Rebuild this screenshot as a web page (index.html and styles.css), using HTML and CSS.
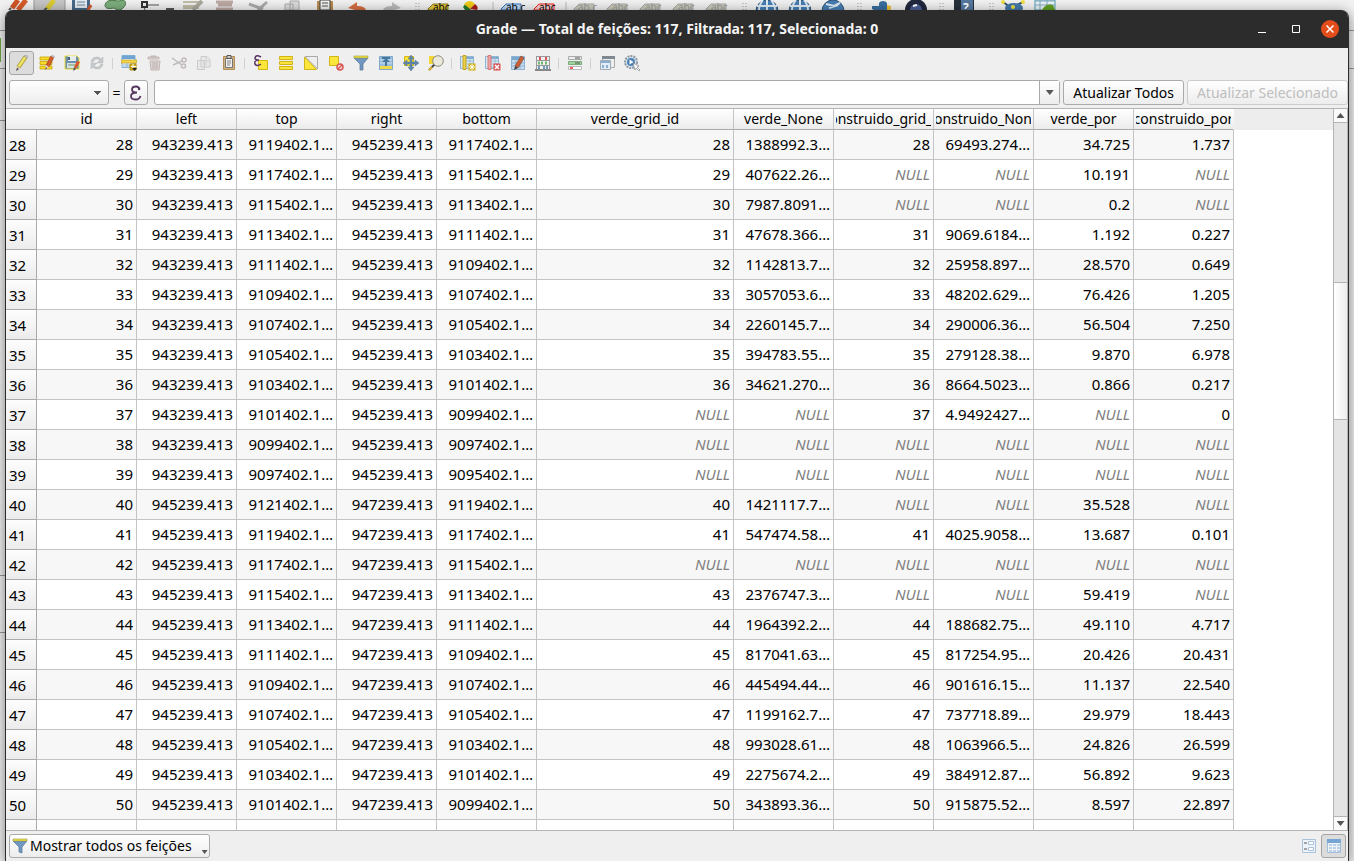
FILE: index.html
```html
<!DOCTYPE html>
<html lang="pt-BR">
<head>
<meta charset="utf-8">
<title>Grade — Total de feições: 117, Filtrada: 117, Selecionada: 0</title>
<link rel="stylesheet" href="styles.css">
</head>
<body>
<div class="backdrop" aria-hidden="true">
<svg class="backdrop-icons" width="1100" height="10" viewBox="0 0 1100 10">
  <path d="M34 0h31v10H34z" fill="#c6c6c6"/><path d="M34 0v10M65 0v10" stroke="#999"/>
  <g stroke-width="5"><path d="M18 0l-6 8" stroke="#cf5527"/><path d="M26 0l-8 10" stroke="#d85c29"/><path d="M54 0l-7 9" stroke="#dbcb35"/></g>
  <path d="M11 8l-2 2M47 8l-3 2" stroke="#555" stroke-width="2"/>
  <path d="M72 0h18v10H72z" fill="#476a8a"/><path d="M75 0h12v8H75z" fill="#e4edf4"/><path d="M77 2h8M77 5h8" stroke="#718695"/><path d="M88 10l3-5" stroke="#ce5a30" stroke-width="3"/>
  <path d="M105 5c2-7 9-4 14-4 8-3 8 4 4 7-2 3-7 2-9 0-5 1-9 1-9-3z" fill="#7cae7d" stroke="#4c7b4c"/>
  <path d="M144 5h15M143 5l2 5" stroke="#555" fill="none"/><path d="M142 2h5v5h-5z" fill="#eee" stroke="#333" stroke-width="2"/><path d="M166 9h8" stroke="#555" stroke-width="2"/>
  <g fill="#c1bda7"><path d="M183 1h19v2h-19zM183 5h16v4h-16z"/></g><path d="M202 1l-9 9" stroke="#aaa99c" stroke-width="4"/>
  <path d="M216 2h17M218 5h14M216 9h17" stroke="#bda9a4" stroke-width="3"/>
  <path d="M249 4l14 5M267 2l-9 8" stroke="#aaa" stroke-width="3"/>
  <path d="M285 4h8v6h-8zM290 1h9v9h-9z" fill="#ddd" stroke="#aaa"/>
  <path d="M317 1h16v9h-16z" fill="#b88b52"/><path d="M320 0h10v10h-10z" fill="#f2f2ef" stroke="#444"/><path d="M322 3h6M322 6h6" stroke="#555"/>
  <path d="M348 8l9-6v4q8 0 9 4h-11z" fill="#d56f42"/><path d="M401 8l-9-6v4q-8 0-9 4h11z" fill="#bbb"/>
  <g fill="#eee" stroke-width="1"><path d="M428 9l5-5h15v6h-20z" fill="#e2c741" stroke="#8d7b20"/><path d="M501 9l5-5h15v6h-20z" fill="#b9d6f3" stroke="#3973ba"/><path d="M534 9l5-5h15v6h-20z" fill="#f8cccc" stroke="#e22"/><path d="M574 9l5-5h15v6h-20zM607 9l5-5h15v6h-20zM640 9l5-5h15v6h-20zM673 9l5-5h15v6h-20zM706 9l5-5h15v6h-20z" fill="#cbcbbb" stroke="#aaa"/></g>
  <g class="tag-text"><text x="433" y="11">abc</text><text x="506" y="11">ab.c</text><text x="539" y="11">abc</text><g fill="#999"><text x="578" y="11">ab.c</text><text x="612" y="11">abc</text><text x="645" y="11">abc</text><text x="678" y="11">abc</text><text x="711" y="11">abc</text></g></g>
  <path d="M463 7l3-4 5 7h-6z" fill="#267b2d"/><path d="M464 4q6-6 11 0l-5 5z" fill="#f1cc16"/><path d="M470 9l5-5q4 3 2 6z" fill="#a9201d"/>
  <g fill="#477eb6" stroke="#315575"><circle cx="767" cy="11" r="11"/><circle cx="800" cy="11" r="11"/><circle cx="833" cy="11" r="11"/></g>
  <g fill="none" stroke="#deebf4" stroke-width="2"><path d="M757 6h20M767 0v10M763 0q-4 5-4 10M771 0q4 5 4 10M790 6h20M800 0v10M796 0q-4 5-4 10M804 0q4 5 4 10M826 4l8 2 6-3M829 8l9-3"/></g>
  <path d="M872 9V6h7V3q1-2 4-2t4 2v7h-13z" fill="#396f9f"/><path d="M887 10V5l4 1v4z" fill="#f0c43c"/>
  <circle cx="916" cy="10" r="11" fill="#20283e"/><circle cx="916" cy="10" r="6" fill="#495d94"/><path d="M913 6l4-1" stroke="#fff" stroke-width="2"/>
  <path d="M954 0h20v10h-20z" fill="#27313c"/><path d="M961 0h12v10h-12z" fill="#56789f"/><text class="help" x="963" y="12">?</text>
  <path d="M1003 2l7 5M1023 2l-8 4" stroke="#30506b" stroke-width="2"/><ellipse cx="1014" cy="8" rx="9" ry="5" fill="#4778a9"/><g fill="#f1df41"><circle cx="1003" cy="2" r="2"/><circle cx="1023" cy="2" r="2"/><circle cx="1013" cy="7" r="2"/></g>
  <path d="M1035 0h20v10h-20z" fill="#eef5fa" stroke="#4c9eb3"/><path d="M1035 1h20M1040 0v10M1047 0v10M1035 5h20" stroke="#7faabd"/><path d="M1042 10q4-7 11-5l2 5z" fill="#63a120"/>
  <path d="M416 3v7M419 3v7M743 3v7M746 3v7M858 3v7M861 3v7M940 3v7M943 3v7M990 3v7M993 3v7" stroke="#999" stroke-dasharray="1 2"/><path d="M493 2v8M566 2v8" stroke="#bbb"/>
</svg>
</div>

<main class="window">
  <header class="titlebar">
    <h1>Grade — Total de feições: 117, Filtrada: 117, Selecionada: 0</h1>
    <div class="window-controls">
      <button aria-label="Minimizar"><svg width="18" height="18"><path d="M5 12.500h8" stroke="#fff"/></svg></button>
      <button aria-label="Maximizar"><svg width="18" height="18"><path d="M5.500 5.500h7v7h-7z" fill="none" stroke="#fff"/></svg></button>
      <button aria-label="Fechar"><svg width="18" height="18"><circle cx="9" cy="9" r="9" fill="#e24d1b"/><path d="M5.500 5.500l7 7M12.500 5.500l-7 7" stroke="#fff" stroke-width="1.500"/></svg></button>
    </div>
  </header>

  <nav class="toolbar" aria-label="Ferramentas">
    <button class="pressed" aria-label="Editar"><svg viewBox="0 0 16 16"><path d="M3 11L10 1l3 2-7 10z" fill="#e5d544" stroke="#9a8e39" stroke-width=".7"/><path d="M5 11l6-9" stroke="#faf08f"/><path d="M3 11l3 2-4 3z" fill="#d8c7ae"/><path d="M2 16l1-3 2 1z" fill="#444"/><path d="M10 1l1-1 3 1-1 2z" fill="#cbcac3" stroke="#888" stroke-width=".4"/></svg></button>
    <button aria-label="Edição múltipla"><svg viewBox="0 0 16 16"><path d="M1 2h12v3H1zM1 6.500h12v3H1zM1 11h12v3H1z" fill="#f8dc25" stroke="#c6a40a" stroke-width=".8"/><path d="M7 10l5-9 3 1-5 10z" fill="#d85c29" stroke="#91482e" stroke-width=".7"/><path d="M7 10l3 2-4 3z" fill="#e9d4ba"/><path d="M6 15l1-3 1 1z" fill="#333"/><path d="M12 1l1-1 3 1-1 2z" fill="#bbb"/></svg></button>
    <button aria-label="Salvar edições"><svg viewBox="0 0 16 16"><path d="M1 1h12l2 2v11H1z" fill="#6b8fae" stroke="#e9dc37"/><path d="M4 1h8v5H4z" fill="#e7ecee"/><path d="M4 2h2v3H4z" fill="#4a6073"/><path d="M3 8h10v5H3z" fill="#d8e2df"/><path d="M4 10h7" stroke="#6d9b74"/><path d="M10 12l3-6 3 1-4 7z" fill="#d85927"/><path d="M10 12l2 2-3 2z" fill="#555"/></svg></button>
    <button aria-label="Recarregar" disabled><svg viewBox="0 0 16 16"><path d="M2 7q1-5 6-5 3 0 4 2l2-2v6H8l3-3Q6 2 4 7zM14 9q-1 5-6 5-3 0-4-2l-2 2V8h6l-3 3q5 3 7-2z" fill="#c5c8ca" stroke="#b4b8bb" stroke-width=".5"/></svg></button>
    <i class="separator"></i>
    <button aria-label="Adicionar feição"><svg viewBox="0 0 16 16"><path d="M1 .5h13v12H1z" fill="#f1f6f9" stroke="#7daed6"/><path d="M1 1h13v3H1z" fill="#6fa5d4"/><path d="M0 5h16v3H0z" fill="#f7d946" stroke="#b2972e" stroke-width=".7"/><path d="M2 10h7M2 12h7M6 8v5" stroke="#91b7d5"/><path d="M9 9h6v6H9z" fill="#d5ad19" stroke="#ad8b13"/><path d="M12 9v5M10 11.500h5" stroke="#fff"/><path d="M11 13h5l-2.500 3z" fill="#222"/></svg></button>
    <button aria-label="Excluir" disabled><svg viewBox="0 0 16 16"><path d="M2 2h11v2H2zM5 1h5v1H5zM4 6h10l-1 9H5z" fill="#ddd5d4" stroke="#c2b6b5"/><path d="M7 7v7M9 7v7M11 7v7" stroke="#bbb0b0"/></svg></button>
    <button aria-label="Recortar" disabled><svg viewBox="0 0 16 16"><path d="M1 3l10 7M2 10l9-4" stroke="#bcbcbc" stroke-width="1.500"/><g fill="none" stroke="#c2baba" stroke-width="1.500"><circle cx="13" cy="5" r="2"/><circle cx="12.500" cy="11" r="2"/></g></svg></button>
    <button aria-label="Copiar" disabled><svg viewBox="0 0 16 16"><path d="M1.500 5.500h7v9h-7zM5 1.500h6l3 3V12H5z" fill="#e8e8e8" stroke="#cacaca"/><path d="M10 2v4h4M7 7h4M7 9h4" fill="none" stroke="#d0d0d0"/></svg></button>
    <button aria-label="Colar"><svg viewBox="0 0 16 16"><path d="M2.500 1.500h11v13h-11z" fill="#ceb284" stroke="#b28e57"/><path d="M4.500 3.500h7v9h-7z" fill="#eee" stroke="#777"/><path d="M6 .5h4v3H6z" fill="#ccc" stroke="#555"/><path d="M6 6h4M6 8h4M6 10h3" stroke="#888"/></svg></button>
    <i class="separator"></i>
    <button aria-label="Selecionar por expressão"><svg viewBox="0 0 16 16"><path d="M5.500 5.500h9v9h-9z" fill="#fbe63b" stroke="#d4b518"/><path d="M8 2Q3-1 2 3q0 2 4 2-5 0-4 4 2 3 6 0" fill="none" stroke="#573361" stroke-width="1.500"/></svg></button>
    <button aria-label="Selecionar tudo"><svg viewBox="0 0 16 16"><path d="M1.500 1.500h13v3h-13zM1.500 6.500h13v3h-13zM1.500 11.500h13v3h-13z" fill="#fae33b" stroke="#d2b316"/></svg></button>
    <button aria-label="Inverter seleção"><svg viewBox="0 0 16 16"><path d="M2 1.500h12.500V14z" fill="#eee" stroke="#aaa"/><path d="M1.500 2v12.500h12z" fill="#fbe63b" stroke="#d4b518"/></svg></button>
    <button aria-label="Desfazer seleção"><svg viewBox="0 0 16 16"><path d="M1.500 1.500h9v9h-9z" fill="#fbe63b" stroke="#d4b518"/><circle cx="12" cy="12" r="3" fill="#fbdada" stroke="#d95757" stroke-width="1.500"/><path d="M10 14l4-4" stroke="#d95757" stroke-width="1.500"/></svg></button>
    <button aria-label="Filtrar"><svg viewBox="0 0 16 16"><path d="M1 3h14l-5 6v6H7V9z" fill="#7198c3" stroke="#557494" stroke-width=".7"/><path d="M1 1h14v2H1z" fill="#ede242" stroke="#9d9b45" stroke-width=".6"/></svg></button>
    <button aria-label="Mover para o topo"><svg viewBox="0 0 16 16"><path d="M1.500 1.500h13v13h-13z" fill="#99bee0" stroke="#82a8c9"/><path d="M2 11h12v3H2z" fill="#edda45"/><path d="M2 5h12M2 8h12" stroke="#c9dcea"/><path d="M4 2h8v2H4zM8 3l4 4H9v4H7V7H4z" fill="#45769d"/></svg></button>
    <button aria-label="Deslocar para seleção"><svg viewBox="0 0 16 16"><path d="M1.500 1.500h9v9h-9z" fill="#fbe63b" stroke="#d4b518"/><path d="M8 0l3 4H9v3h3V5l4 3-4 3V9H9v3h2l-3 4-3-4h2V9H4v2L0 8l4-3v2h3V4H5z" fill="#6287ad" stroke="#456a91" stroke-width=".4"/></svg></button>
    <button aria-label="Zoom para seleção"><svg viewBox="0 0 16 16"><path d="M1 1h8v8H1z" fill="#f1d635"/><path d="M1 15l6-6" stroke="#444" stroke-width="2"/><path d="M1 15l3-3" stroke="#e1b32a" stroke-width="2"/><circle cx="10" cy="6" r="5.300" fill="#e9e8da" stroke="#8e8d80"/></svg></button>
    <i class="separator"></i>
    <button aria-label="Novo campo"><svg viewBox="0 0 16 16"><path d="M.5 1.500h13v12H.5z" fill="#d9e7f0" stroke="#8eb4d4"/><path d="M6 2h7v2H6z" fill="#7da8cd"/><path d="M6 6h7M6 9h7M6 12h7M10 2v11" stroke="#9abed9"/><path d="M3 .5h3v14H3z" fill="#e9cf4c" stroke="#c6a529"/><path d="M8.500 8.500h7v7h-7z" fill="#d3b118"/><path d="M12 9v6M9 12h6M10 10l4 4M14 10l-4 4" stroke="#fff" stroke-width=".9"/></svg></button>
    <button aria-label="Excluir campo"><svg viewBox="0 0 16 16"><path d="M.5 1.500h13v12H.5z" fill="#d9e7f0" stroke="#8eb4d4"/><path d="M6 2h7v2H6z" fill="#7da8cd"/><path d="M6 6h7M6 9h7M6 12h7M10 2v11" stroke="#9abed9"/><path d="M3 .5h3v14H3z" fill="#eba3a4" stroke="#d77b7c"/><path d="M8.500 8.500h7v7h-7z" fill="#db5151"/><path d="M10 10l4 4M14 10l-4 4" stroke="#fff" stroke-width="1.500"/></svg></button>
    <button aria-label="Editar campos"><svg viewBox="0 0 16 16"><path d="M1.500 1.500h13v13h-13z" fill="#c8dced" stroke="#8eb4d4"/><path d="M2 2h12v3H2z" fill="#78a7cf"/><path d="M2 8h12M2 11h12M6 4v10M10 4v10" stroke="#8eb3d2"/><path d="M5 11l6-10 3 2-6 10z" fill="#cc5f35" stroke="#7d4d37" stroke-width=".7"/><path d="M5 11l3 2-4 2z" fill="#444"/></svg></button>
    <button aria-label="Calculadora de campo"><svg viewBox="0 0 16 16"><path d="M1.500 1v13M14.500 1v13M1 5.500h14M1 10.500h14M1 1.500h14" fill="none" stroke="#999"/><path d="M0 14h16v2H0z" fill="#888"/><path d="M4 3.500h3M10 3.500h3" stroke="#dc5058" stroke-width="3" stroke-dasharray="2 1"/><path d="M3 8h5M10 8h2" stroke="#75b775" stroke-width="3" stroke-dasharray="2 1"/><path d="M3 12.500h3M8 12.500h5" stroke="#6f9db9" stroke-width="3" stroke-dasharray="2 1"/></svg></button>
    <i class="separator"></i>
    <button aria-label="Formatação condicional"><svg viewBox="0 0 16 16"><path d="M1.500 1.500h13v3h-13z" fill="#eee" stroke="#aaa"/><path d="M1.500 6.500h13v3h-13z" fill="#a1d5a0" stroke="#7cab7c"/><path d="M1.500 11.500h13v3h-13z" fill="#fff" stroke="#bbb"/><path d="M8 3h5M8 8h5" stroke="#555"/><path d="M3 13h3" stroke="#e22" stroke-width="1.500"/></svg></button>
    <i class="separator"></i>
    <button aria-label="Encaixar tabela"><svg viewBox="0 0 16 16"><path d="M3.500 1.500h12v11h-12z" fill="#eee" stroke="#aaa"/><path d="M3 1h13v3H3z" fill="#808991"/><path d="M1.500 5.500h10v9h-10z" fill="#e3edf3" stroke="#9eacb7"/><path d="M2 6h9v2H2zM3 10h2v3H3zM7 10h2v3H7z" fill="#8aafd0"/></svg></button>
    <button aria-label="Ações"><svg viewBox="0 0 16 16"><circle cx="7" cy="7" r="6" fill="#dce4e9" stroke="#8b99a5" stroke-width="2" stroke-dasharray="2 1"/><circle cx="7" cy="7" r="4" fill="#4c82b5"/><path d="M5.500 4.500l4 2.500-4 2.500z" fill="#fff"/><path d="M9 8l6 3-2 1 3 3-1 1-3-3-1 2z" fill="#fff" stroke="#888" stroke-width=".7"/></svg></button>
  </nav>

  <form class="field-bar">
    <select class="field-select" aria-label="Campo"><option></option></select>
    <label class="equals" for="expression">=</label>
    <button type="button" class="epsilon" aria-label="Editor de expressão"><svg width="14" height="16" viewBox="0 0 14 16"><path d="M10.500 4.500Q10 1.500 7 1.500 3 1.500 3 4.500 3 7.500 8 7.500 2 7.500 2 11q0 3.500 4.500 3.500 4 0 5-3.500" fill="none" stroke="#55365f" stroke-width="1.800"/><circle cx="10" cy="4" r="1.200" fill="#55365f"/></svg></button>
    <div class="expression">
      <input id="expression" type="text">
      <button type="button" aria-label="Expressões recentes"><i class="arrow down"></i></button>
    </div>
    <button type="button" class="push">Atualizar Todos</button>
    <button type="button" class="push" disabled>Atualizar Selecionado</button>
  </form>

  <section class="grid">
    <div class="grid-view">
      <table>
        <colgroup><col class="col-row"><col span="5" class="col"><col class="col-wide"><col span="5" class="col"><col></colgroup>
        <thead><tr>
          <th class="corner"></th>
          <th><span>id</span></th><th><span>left</span></th><th><span>top</span></th><th><span>right</span></th><th><span>bottom</span></th><th><span>verde_grid_id</span></th><th><span>verde_None</span></th><th><span>construido_grid_id</span></th><th><span>construido_None</span></th><th><span>verde_por</span></th><th class="last"><span>construido_por</span></th>
          <th class="filler"></th>
        </tr></thead>
        <tbody id="rows"></tbody>
      </table>
    </div>
    <div class="scrollbar" aria-hidden="true">
      <div class="scroll-step"><i class="arrow up"></i></div>
      <div class="track"><div class="thumb"></div></div>
      <div class="scroll-step"><i class="arrow down"></i></div>
    </div>
  </section>

  <footer class="statusbar">
    <button class="filter"><svg viewBox="0 0 16 16"><path d="M1 3h14l-5 6v6l-3-1V9z" fill="#7198c3" stroke="#557494" stroke-width=".7"/><path d="M1 1h14v2H1z" fill="#ede242" stroke="#9d9b45" stroke-width=".6"/></svg>Mostrar todos os feições<i class="arrow down"></i></button>
    <div class="views">
      <button aria-label="Formulário"><svg viewBox="0 0 16 16"><path d="M1.500 1.500h13v13h-13z" fill="#edf3f8" stroke="#a9c2da"/><path d="M3 5h3M3 11h3" stroke="#555"/><path d="M7.500 3.500h5v3h-5zM7.500 9.500h5v3h-5z" fill="#fff" stroke="#a9c2da"/></svg></button>
      <button class="pressed" aria-label="Tabela"><svg viewBox="0 0 16 16"><path d="M1.500 1.500h13v13h-13z" fill="#edf3f8" stroke="#a1bfdd"/><path d="M1 1h14v4H1z" fill="#78a6d4"/><path d="M3 7h3M7 7h3M11 7h3M3 10h3M7 10h3M11 10h3M3 13h3M7 13h3M11 13h3" stroke="#8db2d6"/></svg></button>
    </div>
  </footer>
</main>
<script src="table.js"></script>
</body>
</html>
```
FILE: styles.css
```css
* { box-sizing: border-box; }
body {
  margin: 0;
  height: 100vh;
  overflow: hidden;
  font: 14px/20px "Noto Sans", "Open Sans", sans-serif;
  color: #000;
  background: #ededed;
}
button, input, select { font: inherit; color: inherit; margin: 0; padding: 0; }
button { border: 0; background: none; }
svg { display: block; }

.backdrop {
  position: absolute;
  inset: 0;
  background: linear-gradient(#999, #999) 0 30px / 100% 1px no-repeat,
    linear-gradient(#999, #999) 0 68px / 100% 1px no-repeat,
    linear-gradient(#999, #999) 0 120px / 6px 1px no-repeat,
    linear-gradient(#70ac45, #70ac45) 0 38px / 1px 24px no-repeat,
    linear-gradient(#999, #999) 0 575px / 6px 1px no-repeat,
    linear-gradient(#999, #999) 0 632px / 6px 1px no-repeat,
    #f2f2f2;
}
.tag-text { font: 10px "Noto Sans", sans-serif; }
.help { font: bold 12px "Noto Sans", sans-serif; fill: #fff; }

.window {
  position: relative;
  display: flex;
  flex-direction: column;
  height: calc(100vh - 10px);
  margin: 10px 5px 0;
  border: solid #2b2b2b;
  border-width: 0 1px;
  border-radius: 8px 8px 0 0;
  background: #efefef;
  box-shadow: 0 3px 14px rgba(0, 0, 0, .5);
}
.titlebar {
  display: grid;
  grid-template-columns: 1fr auto 1fr;
  align-items: center;
  height: 38px;
  padding: 0 9px;
  border-radius: 7px 7px 0 0;
  background: #2c2c2c;
  color: #f5f5f5;
}
.titlebar h1 { grid-column: 2; margin: 0; font-size: 14px; }
.window-controls { display: flex; justify-content: flex-end; gap: 16px; }

.toolbar { display: flex; align-items: center; height: 30px; padding: 0 3px; }
.toolbar button, .views button {
  display: flex;
  align-items: center;
  justify-content: center;
  width: 25px;
  height: 24px;
  border: 1px solid transparent;
  border-radius: 3px;
}
.toolbar svg, .statusbar svg { width: 16px; height: 16px; }
.toolbar .pressed, .views .pressed { background: #dcdcdc; border-color: #a5a5a5; }
.separator { width: 1px; height: 11px; margin: 0 3px; background: #d0d0d0; }

.field-bar { display: flex; height: 30px; padding: 2px 0 3px 3px; }
.field-select, .epsilon, .push, .filter {
  border: 1px solid #aaa;
  border-radius: 3px;
  background: linear-gradient(#fff, #ededed);
}
.field-select {
  width: 100px;
  appearance: none;
  background: linear-gradient(135deg, #555 50%, transparent 50%) 88px 10px / 4px 4px no-repeat,
    linear-gradient(225deg, #555 50%, transparent 50%) 84px 10px / 4px 4px no-repeat,
    linear-gradient(#fff, #ededed);
}
.equals { width: 15px; text-align: center; line-height: 25px; }
.epsilon { display: flex; align-items: center; justify-content: center; width: 24px; margin-right: 6px; }
.expression { display: flex; flex: 1; border: 1px solid #aaa; border-radius: 3px; background: #fff; margin-right: 3px; }
.expression input { flex: 1; min-width: 0; border: 0; background: none; padding: 0 4px; }
.expression button {
  display: flex;
  align-items: center;
  justify-content: center;
  width: 20px;
  border-left: 1px solid #aaa;
  background: linear-gradient(#fff, #ededed);
}
.push { padding: 0 9px; }
.push + .push { margin-left: 3px; }
.push:disabled { color: #bebebe; border-color: #ccc; }
.arrow { width: 8px; height: 5px; background: #555; }
.down { clip-path: polygon(0 0, 100% 0, 50% 100%); }
.up { clip-path: polygon(0 100%, 100% 100%, 50% 0); }

.grid { display: flex; flex: 1; min-height: 0; border: 1px solid #b4b4b4; border-width: 1px 1px 1px 0; background: #fff; }
.grid-view { flex: 1; min-width: 0; overflow: hidden; }
table { width: 100%; table-layout: fixed; border-collapse: separate; border-spacing: 0; }
.col-row { width: 31px; }
.col { width: 100px; }
.col-wide { width: 197px; }
th { font-weight: normal; padding: 0; }
thead th {
  height: 21px;
  border-right: 1px solid #c4c4c4;
  border-bottom: 1px solid #aaa;
  background: linear-gradient(#fff, #ececec);
}
thead span { display: flex; justify-content: center; overflow: hidden; margin: 0 2px; white-space: nowrap; }
thead .last { border-right-color: transparent; }
thead .corner { border-right: 0; }
thead .filler { border: 0; background: #ededed; }
td {
  height: 30px;
  padding: 0 3px 2px 0;
  border-right: 1px solid #c4c4c4;
  border-bottom: 1px solid #c4c4c4;
  text-align: right;
  font-size: 15px;
  white-space: nowrap;
}
tbody th {
  padding: 1px 0 0 3px;
  text-align: left;
  font-size: 15px;
  border-right: 1px solid #aaa;
  border-bottom: 1px solid #aaa;
  background: linear-gradient(#fdfdfd, #ececec);
}
tbody tr:nth-child(odd) td { background: #f7f7f7; }
tbody tr:last-child td { background: #fff; }
tbody tr td.filler { border: 0; background: #fff; }
.null { font-style: italic; color: #808080; }

.scrollbar { display: flex; flex-direction: column; width: 14px; border-left: 1px solid #b4b4b4; }
.scroll-step { display: flex; align-items: center; justify-content: center; height: 13px; background: #fafafa; }
.track { flex: 1; background: #e4e4e4; border: solid #b4b4b4; border-width: 1px 0; padding-top: 159px; }
.thumb { height: 138px; border: solid #b4b4b4; border-width: 1px 0; background: linear-gradient(90deg, #fff, #eee); }

.statusbar { display: flex; justify-content: space-between; align-items: flex-start; height: 30px; padding: 3px 2px 0 3px; }
.filter { display: flex; align-items: center; gap: 2px; height: 24px; padding: 0 1px 0 2px; }
.filter .arrow { width: 6px; height: 4px; align-self: flex-end; margin: 0 0 3px 8px; }
.views { display: flex; }
```
FILE: table.js
```js
const rows = [
  "28|943239.413|9119402.1…|945239.413|9117402.1…|28|1388992.3…|28|69493.274…|34.725|1.737",
  "29|943239.413|9117402.1…|945239.413|9115402.1…|29|407622.26…|NULL|NULL|10.191|NULL",
  "30|943239.413|9115402.1…|945239.413|9113402.1…|30|7987.8091…|NULL|NULL|0.2|NULL",
  "31|943239.413|9113402.1…|945239.413|9111402.1…|31|47678.366…|31|9069.6184…|1.192|0.227",
  "32|943239.413|9111402.1…|945239.413|9109402.1…|32|1142813.7…|32|25958.897…|28.570|0.649",
  "33|943239.413|9109402.1…|945239.413|9107402.1…|33|3057053.6…|33|48202.629…|76.426|1.205",
  "34|943239.413|9107402.1…|945239.413|9105402.1…|34|2260145.7…|34|290006.36…|56.504|7.250",
  "35|943239.413|9105402.1…|945239.413|9103402.1…|35|394783.55…|35|279128.38…|9.870|6.978",
  "36|943239.413|9103402.1…|945239.413|9101402.1…|36|34621.270…|36|8664.5023…|0.866|0.217",
  "37|943239.413|9101402.1…|945239.413|9099402.1…|NULL|NULL|37|4.9492427…|NULL|0",
  "38|943239.413|9099402.1…|945239.413|9097402.1…|NULL|NULL|NULL|NULL|NULL|NULL",
  "39|943239.413|9097402.1…|945239.413|9095402.1…|NULL|NULL|NULL|NULL|NULL|NULL",
  "40|945239.413|9121402.1…|947239.413|9119402.1…|40|1421117.7…|NULL|NULL|35.528|NULL",
  "41|945239.413|9119402.1…|947239.413|9117402.1…|41|547474.58…|41|4025.9058…|13.687|0.101",
  "42|945239.413|9117402.1…|947239.413|9115402.1…|NULL|NULL|NULL|NULL|NULL|NULL",
  "43|945239.413|9115402.1…|947239.413|9113402.1…|43|2376747.3…|NULL|NULL|59.419|NULL",
  "44|945239.413|9113402.1…|947239.413|9111402.1…|44|1964392.2…|44|188682.75…|49.110|4.717",
  "45|945239.413|9111402.1…|947239.413|9109402.1…|45|817041.63…|45|817254.95…|20.426|20.431",
  "46|945239.413|9109402.1…|947239.413|9107402.1…|46|445494.44…|46|901616.15…|11.137|22.540",
  "47|945239.413|9107402.1…|947239.413|9105402.1…|47|1199162.7…|47|737718.89…|29.979|18.443",
  "48|945239.413|9105402.1…|947239.413|9103402.1…|48|993028.61…|48|1063966.5…|24.826|26.599",
  "49|945239.413|9103402.1…|947239.413|9101402.1…|49|2275674.2…|49|384912.87…|56.892|9.623",
  "50|945239.413|9101402.1…|947239.413|9099402.1…|50|343893.36…|50|915875.52…|8.597|22.897",
  "||||||||||"
];

const body = document.getElementById("rows");
for (const line of rows) {
  const values = line.split("|");
  const row = body.insertRow();
  const head = document.createElement("th");
  head.scope = "row";
  head.textContent = values[0];
  row.append(head);
  for (const value of values) {
    const cell = row.insertCell();
    cell.textContent = value;
    if (value === "NULL") cell.className = "null";
  }
  row.insertCell().className = "filler";
}
```
